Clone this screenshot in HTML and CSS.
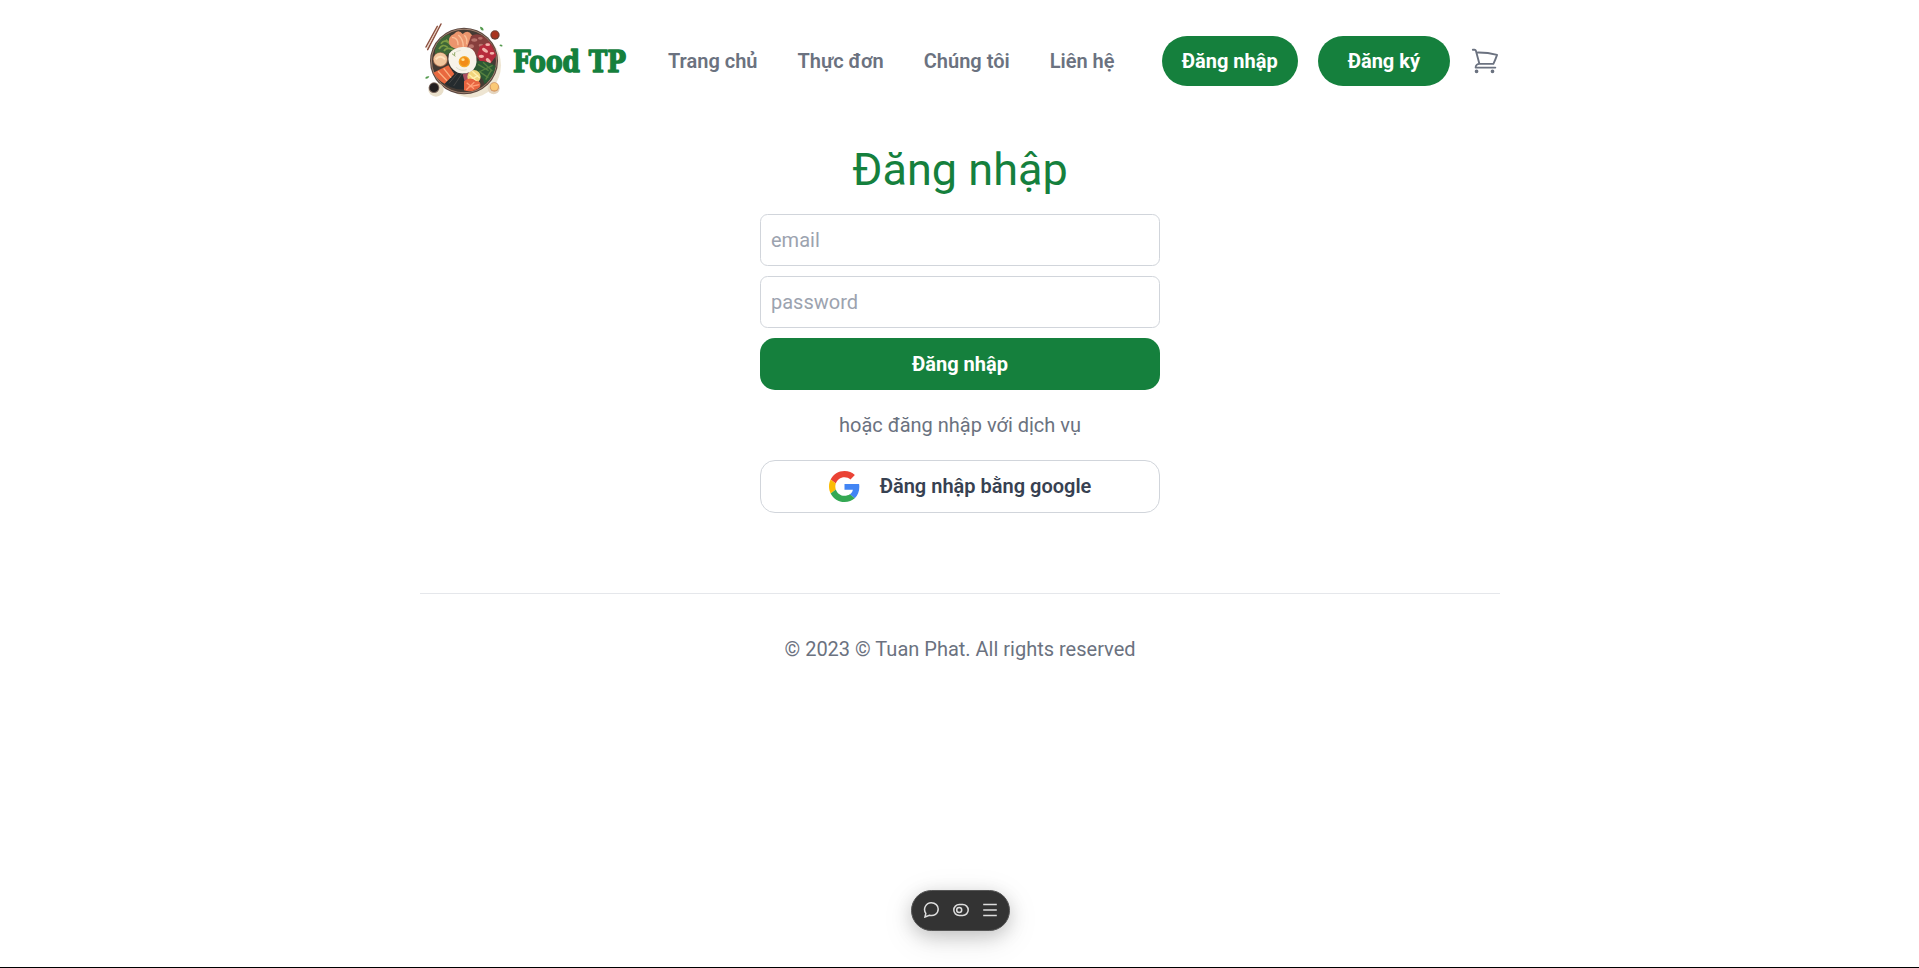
FILE: index.html
```html
<!DOCTYPE html>
<html lang="vi">
<head>
<meta charset="utf-8">
<title>Food TP</title>
<link rel="stylesheet" href="styles.css">
</head>
<body>
<div class="page">
  <header class="header">
    <a class="logo">
      <svg class="bowl" viewBox="0 3 270 270">
        <ellipse cx="153" cy="151" rx="90" ry="97" fill="#eee5d2"/>
        <g stroke-linecap="round"><path d="M52 34 18 96M63 27 23 104" stroke="#8d5140" stroke-width="4.500"/><path d="M54 36 21 99" stroke="#e0b9a2" stroke-width="2"/></g>
        <ellipse cx="132" cy="138" rx="102" ry="100" fill="#59453e"/>
        <ellipse cx="132" cy="138" rx="99" ry="97" fill="#a38370"/>
        <ellipse cx="132" cy="138" rx="96" ry="94" fill="#443a33"/>
        <path d="M45 117C42 85 66 65 88 58l17 43-28 22z" fill="#3e6638"/>
        <path d="M57 102q10-18 26-5M63 86q10-15 26 0M72 108q8-14 30-3M78 74l20 22" fill="none" stroke="#7c9c43" stroke-width="5"/>
        <path d="M88 88q-6-24 14-31 13-17 26 0 16-14 27 2 13 13-5 29-10 19-28 11-20 8-34-11z" fill="#ec956d"/>
        <path d="M96 67q19 1 18 24M115 60q15 13 15 35M133 61q10 9 7 27" fill="none" stroke="#fbc19a" stroke-width="4"/>
        <path d="M153 63q21-12 43 5 28 20 33 54l-20 24-29-9-38-42z" fill="#873e3c"/>
        <g fill="#b8736b"><ellipse cx="163" cy="75" rx="9" ry="5"/><ellipse cx="181" cy="70" rx="7" ry="4"/><ellipse cx="154" cy="94" rx="8" ry="6"/><ellipse cx="183" cy="91" rx="7" ry="5"/></g>
        <path d="M180 94l28-12 21 39-18 25-32-8-7-20z" fill="#b72b3c"/>
        <g fill="#f2b4ac"><ellipse cx="203" cy="89" rx="7" ry="4"/><ellipse cx="195" cy="106" rx="10" ry="5" transform="rotate(35 195 106)"/><ellipse cx="216" cy="115" rx="7" ry="4"/><ellipse cx="184" cy="124" rx="8" ry="5"/><ellipse cx="205" cy="137" rx="9" ry="5" transform="rotate(45 205 137)"/></g>
        <path d="M168 139q30-5 59 14-5 35-33 54-9-28-35-38z" fill="#2c5934"/>
        <path d="M174 148l32 19M218 151l-41 20M189 142l28 26M197 194l18-30M177 169l28 19" stroke="#56813f" stroke-width="4"/>
        <path d="M93 166l42-8 3 65q-43 5-72-25z" fill="#252b2e"/>
        <path d="M78 197l22-28M87 205l28-34M101 213l27-40" stroke="#454746" stroke-width="3"/>
        <path d="M128 178l24-6 4 27-20 8z" fill="#a84e61"/>
        <circle cx="162" cy="185" r="20" fill="#f1d47b"/>
        <path d="M148 179l24 22M157 169l22 20M149 196l26-15" stroke="#fff0b0" stroke-width="4"/>
        <path d="M132 199q17-16 35-2 19 1 13 19-22 19-48 10z" fill="#e76540"/>
        <path d="M140 203l22 18M163 202l-24 22M145 216l33-7" stroke="#ffa177" stroke-width="4"/>
        <path d="M40 173 85 151l18 26-29 29q-20-10-34-33z" fill="#e9683f"/>
        <path d="M54 169 81 197M71 160l22 28" stroke="#fbb181" stroke-width="4"/>
        <circle cx="61" cy="134" r="22" fill="#a66e50"/><circle cx="61" cy="133" r="20" fill="#f1c59c"/><path d="M47 133q14-15 28 0" fill="none" stroke="#ffe1bd" stroke-width="6"/>
        <path d="M87 116q17-21 43-20 33-2 39 29 5 34-19 46-29 12-49-6-21-19-14-49z" fill="#f7f3e9"/>
        <path d="M100 119q9-13 22-13M108 157q15 13 32 7" fill="none" stroke="#dce0cf" stroke-width="3"/>
        <circle cx="133" cy="140" r="17" fill="#f3aa2b"/><circle cx="133" cy="140" r="13" fill="#f28c19"/><ellipse cx="129" cy="134" rx="5" ry="4" fill="#ffe291"/>
        <path d="M96 116l10 8M104 112v10" stroke="#94ad6a" stroke-width="3"/>
        <circle cx="225" cy="60" r="14" fill="#704136"/><circle cx="225" cy="59" r="10" fill="#a9341f"/>
        <ellipse cx="48" cy="224" rx="23" ry="21" fill="#e9dfca"/><circle cx="42" cy="218" r="16" fill="#756259"/><circle cx="42" cy="218" r="13" fill="#231f20"/>
        <circle cx="221" cy="220" r="18" fill="#e5d5bf"/><circle cx="223" cy="216" r="14" fill="#d59a65"/><circle cx="223" cy="215" r="11" fill="#fac977"/>
        <path d="M180 35q10 0 11 11-10 2-11-11M238 91q4-6 10 1-3 6-10-1M15 190q3-8 13-6-3 10-13 6" fill="#559b4f"/>
      </svg>
      <svg class="wordmark" viewBox="0 0 120 44"><text class="brand" x="3" y="33" textLength="113" lengthAdjust="spacingAndGlyphs">Food TP</text></svg>
    </a>
    <nav class="nav"><a>Trang chủ</a><a>Thực đơn</a><a>Chúng tôi</a><a>Liên hệ</a></nav>
    <div class="account">
      <a class="pill">Đăng nhập</a><a class="pill pill-wide">Đăng ký</a>
      <svg class="cart" viewBox="0 0 24 24"><path d="M2.250 3h1.386c.51 0 .955.343 1.087.835l.383 1.437M7.500 14.250a3 3 0 0 0-3 3h15.750m-12.750-3h11.218c1.121-2.300 2.100-4.684 2.924-7.138a60.114 60.114 0 0 0-16.536-1.840M7.500 14.250 5.106 5.272M6 20.250a.75.75 0 1 1-1.500 0 .75.75 0 0 1 1.500 0Zm12.750 0a.75.75 0 1 1-1.500 0 .75.75 0 0 1 1.500 0Z"/></svg>
    </div>
  </header>
  <main class="login">
    <h1>Đăng nhập</h1>
    <form class="form">
      <input type="email" placeholder="email">
      <input type="password" placeholder="password">
      <button class="submit" type="button">Đăng nhập</button>
      <p class="divider">hoặc đăng nhập với dịch vụ</p>
      <button class="google" type="button">
        <svg viewBox="0 0 48 48"><path fill="#EA4335" d="M24 9.500c3.540 0 6.710 1.220 9.210 3.600l6.850-6.850C35.900 2.380 30.470 0 24 0 14.620 0 6.510 5.380 2.560 13.220l7.980 6.190C12.430 13.720 17.740 9.500 24 9.500z"/><path fill="#4285F4" d="M46.980 24.550c0-1.570-.15-3.090-.38-4.550H24v9.020h12.940c-.58 2.960-2.260 5.480-4.780 7.180l7.730 6c4.510-4.180 7.090-10.360 7.090-17.650z"/><path fill="#FBBC05" d="M10.530 28.590c-.48-1.450-.76-2.990-.76-4.590s.27-3.140.76-4.590l-7.980-6.190C.92 16.460 0 20.120 0 24c0 3.880.92 7.540 2.560 10.780l7.970-6.190z"/><path fill="#34A853" d="M24 48c6.480 0 11.930-2.130 15.890-5.810l-7.730-6c-2.150 1.450-4.920 2.300-8.160 2.300-6.260 0-11.570-4.220-13.470-9.910l-7.980 6.190C6.510 42.620 14.620 48 24 48z"/></svg>
        <span>Đăng nhập bằng google</span>
      </button>
    </form>
  </main>
  <footer class="footer">© 2023 © Tuan Phat. All rights reserved</footer>
</div>
<div class="toolbar">
  <svg viewBox="0 0 16 16"><path d="M2 15 2.800 11.300C-.4 6.500 3.200.8 8.200.8c4.200 0 7 2.700 7 6.200 0 4.500-4.200 7.500-8.800 6.200Z"/></svg>
  <svg viewBox="0 0 16 16"><rect x=".8" y="2.500" width="14.400" height="11" rx="5.500"/><circle cx="6.200" cy="8" r="2.500"/></svg>
  <svg viewBox="0 0 16 16"><path d="M1.200 2.500h13.600M1.200 8h13.600M1.200 13.500h13.600"/></svg>
</div>
<div class="edge"></div>
</body>
</html>
```
FILE: styles.css
```css
* { box-sizing: border-box; }
html { overflow: hidden; }
body { margin: 0; position: relative; width: 1920px; height: 968px; background: #fff; color: #6b7280; font: 20px/30px Roboto, sans-serif; }
.page { width: 1080px; margin: 0 auto; }
.header { display: flex; align-items: center; height: 121px; }
.logo { display: flex; align-items: center; width: 210px; }
.bowl { width: 90px; height: 90px; flex: none; }
.wordmark { width: 120px; height: 44px; flex: none; overflow: visible; }
.brand { font: bold 29px "DejaVu Serif", serif; fill: #15803d; stroke: #15803d; stroke-width: 1.500; stroke-linejoin: round; }
.nav { display: flex; gap: 40px; margin-left: 38px; font-weight: 600; white-space: nowrap; }
.account { display: flex; align-items: center; gap: 20px; margin-left: auto; font-weight: 700; }
.pill { padding: 10px 20px; border-radius: 25px; background: #15803d; color: #fff; white-space: nowrap; }
.pill-wide { padding: 10px 30px; }
.cart { width: 30px; height: 30px; fill: none; stroke: #6b7280; stroke-width: 1.500; stroke-linecap: round; stroke-linejoin: round; }
.login { padding-top: 24px; }
h1 { margin: 0 0 19px; color: #15803d; font-size: 45px; line-height: 50px; font-weight: 400; text-align: center; }
.form { display: flex; flex-direction: column; width: 400px; margin: 0 auto; }
input, button { width: 100%; height: 52px; margin: 0 0 10px; font: inherit; }
input { padding: 10px; border: 1px solid #d1d5db; border-radius: 7.500px; background: #fff; }
input::placeholder { color: #9ca3af; opacity: 1; }
.submit { border: 0; border-radius: 15px; background: #15803d; color: #fff; font-weight: 700; }
.divider { margin: 10px 0 20px; text-align: center; }
.google { display: flex; justify-content: center; align-items: center; gap: 20px; height: 53px; margin: 0; padding-bottom: 2px; border: 1px solid #d1d5db; border-radius: 15px; background: #fff; color: #374151; font-weight: 600; }
.google svg { width: 31px; height: 31px; }
.footer { margin-top: 80px; padding: 40px 0; border-top: 1px solid #e5e7eb; text-align: center; }
.toolbar { position: absolute; left: 911px; top: 890px; width: 99px; height: 41px; padding: 0 11px 1px; display: flex; align-items: center; justify-content: space-between; border: 1px solid #555; border-radius: 21px; background: #333; box-shadow: 0 5px 18px rgba(0,0,0,.18), 0 8px 34px rgba(0,0,0,.1); }
.toolbar svg { width: 16px; height: 16px; fill: none; stroke: #ddd; stroke-width: 1.500; }
.edge { position: absolute; left: 0; right: 0; bottom: 0; height: 1px; background: #000; }
```
